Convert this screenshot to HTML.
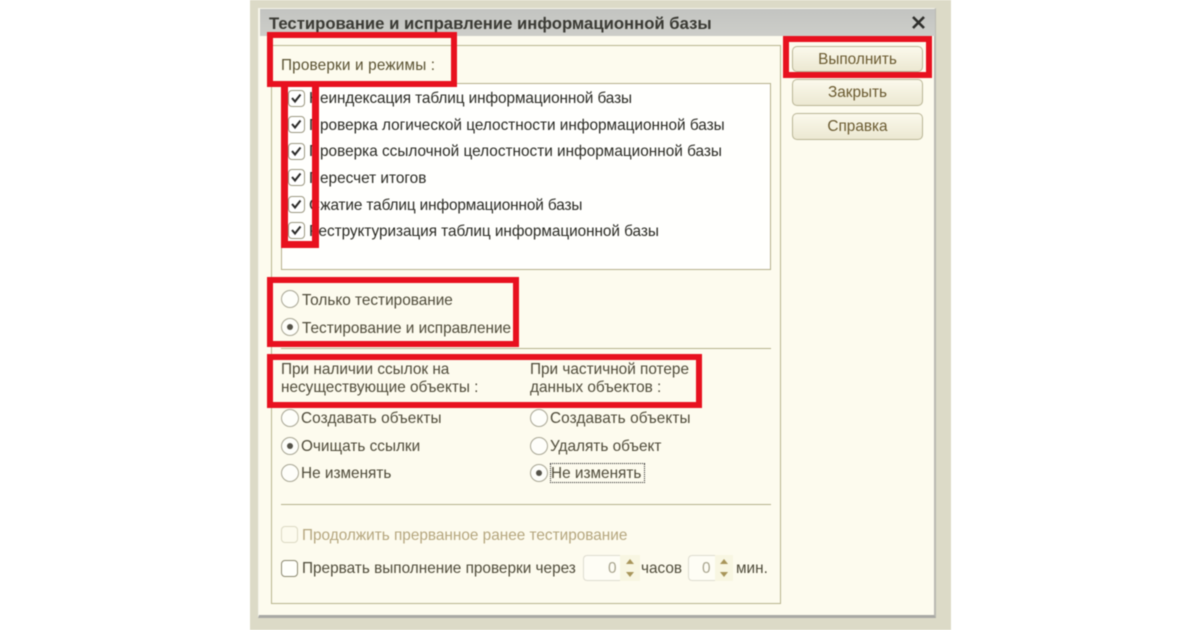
<!DOCTYPE html>
<html><head><meta charset="utf-8">
<style>
html,body{margin:0;padding:0;background:#fff}
#root{position:relative;width:1200px;height:630px;overflow:hidden;background:#fff;font-family:"Liberation Sans",sans-serif;font-size:15.35px;color:#4f4b3a}
#blur{position:absolute;left:0;top:0;width:1200px;height:630px;filter:blur(.5px)}
.a{position:absolute;box-sizing:border-box}
.t{position:absolute;white-space:nowrap;line-height:18px;height:18px}
.l{color:#2a2a24}
.cb{position:absolute;box-sizing:border-box;width:17px;height:17px;border:1.5px solid #9c9982;border-radius:4px;background:#fff}
.cb svg{position:absolute;left:1px;top:1px}
.r{position:absolute;box-sizing:border-box;width:18px;height:18px;border:1.5px solid #a8a694;border-radius:50%;background:#fefefa}
.r.on:after{content:"";position:absolute;left:4.5px;top:4.5px;width:6px;height:6px;border-radius:50%;background:#55534a}
.btn{position:absolute;left:792px;width:131px;box-sizing:border-box;border:1.5px solid #b9b595;border-radius:5px;background:linear-gradient(#fbf9ec,#ece8d2);text-align:center;color:#6a5a30;font-size:15.35px}
.red{position:absolute;box-sizing:border-box;border:6.5px solid #e8111f}
.hr{position:absolute;left:281px;width:490px;height:1px;background:#b5b18c}
</style></head>
<body><div id="root"><div id="blur">
<div class="a" style="left:250px;top:0;width:701px;height:630px;background:#dcdac7"></div>
<div class="a" style="left:258px;top:8px;width:678px;height:610px;background:#fdfbee;border:1.5px solid #f4f3ea;border-bottom:3px solid #a9a9a4;border-right:2px solid #b9b9b2"></div>
<div class="a" style="left:260px;top:9px;width:675px;height:27px;background:linear-gradient(#c3c4c1,#cdcec9)"></div>
<div class="t" style="left:269px;top:15px;font-weight:bold;font-size:16.7px;color:#3a3a34">Тестирование и исправление информационной базы</div>
<svg class="a" style="left:911px;top:15px" width="15" height="15" viewBox="0 0 15 15"><path d="M2 2L13 13M13 2L2 13" stroke="#2e2e2b" stroke-width="2.6" fill="none"/></svg>

<div class="a" style="left:271px;top:45px;width:510px;height:559px;border:1.5px solid #b8b48e;background:#fdfbee"></div>
<div class="t" style="left:281px;top:57px;color:#5a5232;letter-spacing:.15px">Проверки и режимы :</div>
<div class="a" style="left:281px;top:83px;width:490px;height:187px;border:1.5px solid #b5b18c;background:#fffffd"></div>

<div class="cb" style="left:288px;top:90px"><svg width="12" height="12" viewBox="0 0 12 12"><path d="M2 6L5 9.5L10.5 2.5" stroke="#2a2a28" stroke-width="2" fill="none"/></svg></div>
<div class="cb" style="left:288px;top:116px"><svg width="12" height="12" viewBox="0 0 12 12"><path d="M2 6L5 9.5L10.5 2.5" stroke="#2a2a28" stroke-width="2" fill="none"/></svg></div>
<div class="cb" style="left:288px;top:143px"><svg width="12" height="12" viewBox="0 0 12 12"><path d="M2 6L5 9.5L10.5 2.5" stroke="#2a2a28" stroke-width="2" fill="none"/></svg></div>
<div class="cb" style="left:288px;top:169px"><svg width="12" height="12" viewBox="0 0 12 12"><path d="M2 6L5 9.5L10.5 2.5" stroke="#2a2a28" stroke-width="2" fill="none"/></svg></div>
<div class="cb" style="left:288px;top:196px"><svg width="12" height="12" viewBox="0 0 12 12"><path d="M2 6L5 9.5L10.5 2.5" stroke="#2a2a28" stroke-width="2" fill="none"/></svg></div>
<div class="cb" style="left:288px;top:222px"><svg width="12" height="12" viewBox="0 0 12 12"><path d="M2 6L5 9.5L10.5 2.5" stroke="#2a2a28" stroke-width="2" fill="none"/></svg></div>

<div class="t l" style="left:309px;top:90px;letter-spacing:-.08px">Неиндексация таблиц информационной базы</div>
<div class="t l" style="left:309px;top:117px">Проверка логической целостности информационной базы</div>
<div class="t l" style="left:309px;top:143px">Проверка ссылочной целостности информационной базы</div>
<div class="t l" style="left:309px;top:170px">Пересчет итогов</div>
<div class="t l" style="left:309px;top:197px;letter-spacing:-.12px">Сжатие таблиц информационной базы</div>
<div class="t l" style="left:309px;top:223px;letter-spacing:-.05px">Реструктуризация таблиц информационной базы</div>

<div class="r" style="left:281px;top:290px"></div>
<div class="r on" style="left:281px;top:318px"></div>
<div class="t" style="left:302px;top:292px">Только тестирование</div>
<div class="t" style="left:302px;top:320px">Тестирование и исправление</div>
<div class="hr" style="top:348px"></div>

<div class="t" style="left:281px;top:361px">При наличии ссылок на</div>
<div class="t" style="left:281px;top:379px">несуществующие объекты :</div>
<div class="t" style="left:530px;top:361px">При частичной потере</div>
<div class="t" style="left:530px;top:379px">данных объектов :</div>

<div class="r" style="left:281px;top:409px"></div>
<div class="r on" style="left:281px;top:437px"></div>
<div class="r" style="left:281px;top:464px"></div>
<div class="t" style="left:301px;top:410px;letter-spacing:.1px">Создавать объекты</div>
<div class="t" style="left:301px;top:438px">Очищать ссылки</div>
<div class="t" style="left:301px;top:465px">Не изменять</div>

<div class="r" style="left:530px;top:409px"></div>
<div class="r" style="left:530px;top:437px"></div>
<div class="r on" style="left:530px;top:464px"></div>
<div class="t" style="left:550px;top:410px;letter-spacing:.1px">Создавать объекты</div>
<div class="t" style="left:550px;top:438px">Удалять объект</div>
<div class="t" style="left:551px;top:465px">Не изменять</div>
<div class="a" style="left:550px;top:463px;width:95px;height:20px;border:1px dotted #222"></div>

<div class="hr" style="top:504px"></div>

<div class="a" style="left:281px;top:526px;width:17px;height:17px;border:1.5px solid #dcd9c4;border-radius:4px"></div>
<div class="t" style="left:302px;top:527px;color:#b5a67e">Продолжить прерванное ранее тестирование</div>
<div class="a" style="left:281px;top:560px;width:17px;height:17px;border:1.5px solid #8d8a72;border-radius:4px;background:#fffffb"></div>
<div class="t" style="left:302px;top:560px">Прервать выполнение проверки через</div>

<div class="a" style="left:583px;top:555px;width:38px;height:26px;border:1.5px solid #dedcd0;border-right:0;border-radius:4px 0 0 4px;background:#fefdf5"></div>
<div class="a" style="left:620px;top:555px;width:20px;height:26px;background:#f8f6e2"></div>
<div class="t" style="left:608px;top:560px;color:#a8a48e">0</div>
<svg class="a" style="left:624px;top:558px" width="12" height="20" viewBox="0 0 12 20"><path d="M6 1L10 6H2ZM2 14H10L6 19Z" fill="#a8955a"/></svg>
<div class="t" style="left:641px;top:560px">часов</div>
<div class="a" style="left:688px;top:555px;width:28px;height:26px;border:1.5px solid #dedcd0;border-right:0;border-radius:4px 0 0 4px;background:#fefdf5"></div>
<div class="a" style="left:715px;top:555px;width:18px;height:26px;background:#f8f6e2"></div>
<div class="t" style="left:702px;top:560px;color:#a8a48e">0</div>
<svg class="a" style="left:718px;top:558px" width="12" height="20" viewBox="0 0 12 20"><path d="M6 1L10 6H2ZM2 14H10L6 19Z" fill="#a8955a"/></svg>
<div class="t" style="left:736px;top:560px">мин.</div>

<div class="btn" style="top:46px;height:26px;line-height:25px">Выполнить</div>
<div class="btn" style="top:79px;height:27px;line-height:26px">Закрыть</div>
<div class="btn" style="top:113px;height:27px;line-height:26px">Справка</div>

<div class="red" style="left:267px;top:32px;width:190px;height:55px"></div>
<div class="a" style="left:281px;top:87px;width:7px;height:160px;background:#e8111f"></div>
<div class="a" style="left:312px;top:87px;width:7px;height:160px;background:#e8111f"></div>
<div class="a" style="left:281px;top:241px;width:38px;height:7px;background:#e8111f"></div>
<div class="red" style="left:267px;top:277px;width:252px;height:70px"></div>
<div class="red" style="left:267px;top:354px;width:435px;height:54px"></div>
<div class="red" style="left:783px;top:36px;width:149px;height:42px"></div>
</div></div></body></html>
